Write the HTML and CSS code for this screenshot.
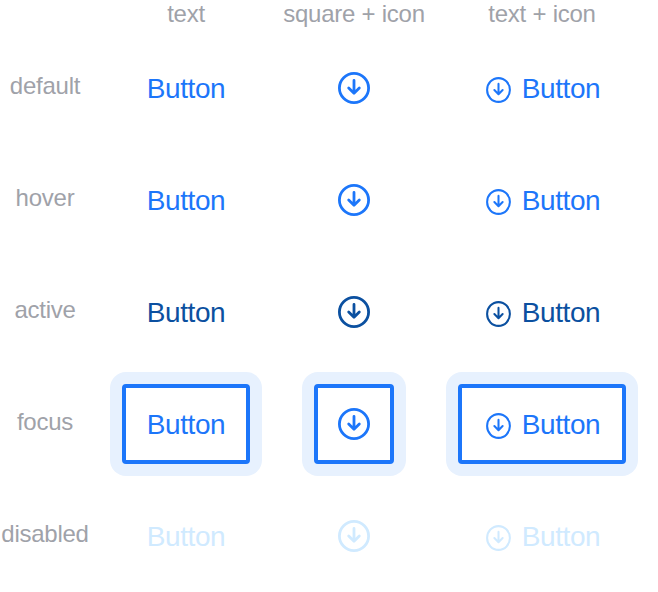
FILE: index.html
```html
<!DOCTYPE html>
<html lang="en">
<head>
<meta charset="utf-8">
<title>Button states</title>
<link rel="stylesheet" href="styles.css">
</head>
<body>
<svg width="0" height="0" class="defs">
  <symbol id="down" viewBox="0 0 32 32" preserveAspectRatio="none">
    <circle cx="16" cy="16" r="14.6"/>
    <path d="M16 8.5V21M10.7 16L16 21.2L21.3 16"/>
  </symbol>
</svg>
<main class="sheet">
  <div class="row head"><span></span><span class="col">text</span><span class="col">square + icon</span><span class="col">text + icon</span></div>
  <div class="row"><span class="state">default</span><button class="btn"><span class="label">Button</span></button><button class="btn square"><svg class="icon"><use href="#down"/></svg></button><button class="btn mixed"><svg class="icon small"><use href="#down"/></svg><span class="label">Button</span></button></div>
  <div class="row"><span class="state">hover</span><button class="btn"><span class="label">Button</span></button><button class="btn square"><svg class="icon"><use href="#down"/></svg></button><button class="btn mixed"><svg class="icon small"><use href="#down"/></svg><span class="label">Button</span></button></div>
  <div class="row active"><span class="state">active</span><button class="btn"><span class="label">Button</span></button><button class="btn square"><svg class="icon"><use href="#down"/></svg></button><button class="btn mixed"><svg class="icon small"><use href="#down"/></svg><span class="label">Button</span></button></div>
  <div class="row focus"><span class="state">focus</span><button class="btn"><span class="label">Button</span></button><button class="btn square"><svg class="icon"><use href="#down"/></svg></button><button class="btn mixed"><svg class="icon small"><use href="#down"/></svg><span class="label">Button</span></button></div>
  <div class="row disabled"><span class="state">disabled</span><button class="btn"><span class="label">Button</span></button><button class="btn square"><svg class="icon"><use href="#down"/></svg></button><button class="btn mixed"><svg class="icon small"><use href="#down"/></svg><span class="label">Button</span></button></div>
</main>
</body>
</html>
```
FILE: styles.css
```css
* { box-sizing: border-box; }
body {
  margin: 0;
  background: #fff;
  font-family: "Liberation Sans", Arial, sans-serif;
}
.defs { display: block; }
.sheet { width: 658px; height: 592px; overflow: hidden; }
.row {
  display: grid;
  grid-template-columns: 90px 192px 144px 232px;
  height: 112px;
  align-items: center;
  justify-items: center;
}
.head { height: 32px; align-items: start; }
.col, .state {
  color: #9fa2a9;
  font-size: 24px;
  line-height: 28px;
  letter-spacing: -0.25px;
  white-space: nowrap;
}
.state { padding-bottom: 4px; }
.btn {
  position: relative;
  display: flex;
  align-items: center;
  justify-content: center;
  width: 128px;
  height: 80px;
  padding: 0;
  border: 4px solid transparent;
  border-radius: 4px;
  background: #fff;
  color: #1c76fa;
  font: 28px/32px "Liberation Sans", Arial, sans-serif;
  letter-spacing: -0.4px;
}
.label { padding-top: 2px; }
.square { width: 80px; }
.mixed { width: 168px; gap: 11px; padding-left: 2px; }
.icon {
  width: 32px;
  height: 32px;
  fill: none;
  stroke: currentColor;
  stroke-width: 2.8;
  stroke-linecap: round;
  stroke-linejoin: round;
}
.small { width: 25px; height: 26px; margin-top: 4px; stroke-width: 2.6; }
.active .btn { color: #0b50a0; }
.focus .btn { border-color: #1c76fa; }
.focus .btn::before {
  content: "";
  position: absolute;
  inset: -16px;
  z-index: -1;
  border-radius: 16px;
  background: #e7f1fe;
}
.disabled .btn { color: #d0eaff; }
```
